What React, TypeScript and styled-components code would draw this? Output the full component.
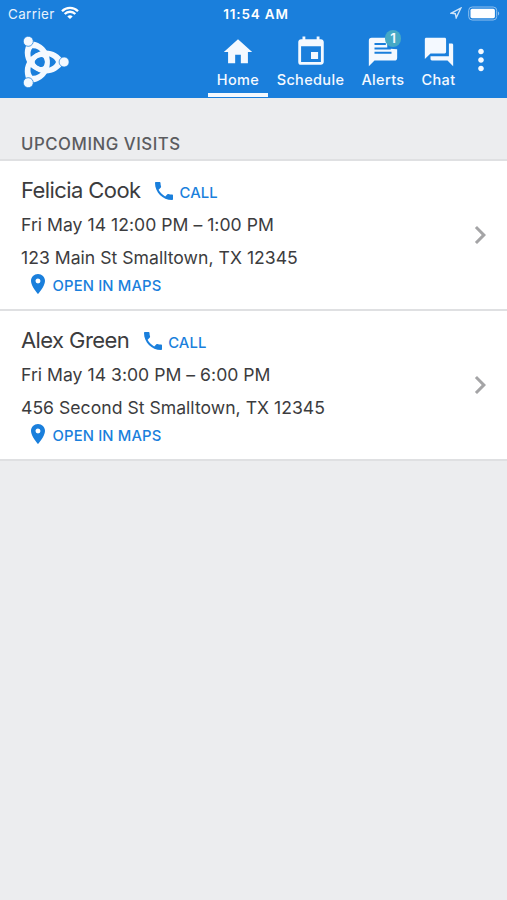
import React from 'react';
import styled, { createGlobalStyle } from 'styled-components';
import { MdHome, MdEvent, MdForum, MdMoreVert, MdPhone, MdPlace, MdChevronRight } from 'react-icons/md';

const BLUE = '#1a7fdc';
const PALE = '#f4f9ff';

const GlobalStyle = createGlobalStyle`
  * { box-sizing: border-box; }
  body { margin: 0; background: #ecedef; font-family: Inter, "Liberation Sans", sans-serif; }
`;

const Screen = styled.div`
  width: 507px;
  height: 900px;
  overflow: hidden;
  background: #ecedef;
  color: #3c3c3e;
`;

const StatusBar = styled.div`
  display: grid;
  grid-template-columns: 1fr auto 1fr;
  align-items: center;
  height: 28px;
  padding: 0 7px 0 8px;
  background: ${BLUE};
  color: #e8f2fc;
  font-size: 13.4px;
  line-height: 27px;
`;

const StatusSide = styled.div<{ $end?: boolean }>`
  display: flex;
  align-items: center;
  justify-content: ${p => (p.$end ? 'flex-end' : 'flex-start')};
  gap: 6px;
  letter-spacing: 0.4px;
  svg { margin-top: -2px; }
`;

const Clock = styled.div`
  padding-left: 4px;
  color: #fff;
  font-size: 13.5px;
  font-weight: 600;
  letter-spacing: 0.85px;
`;

const NavBar = styled.header`
  display: flex;
  height: 70px;
  background: ${BLUE};
  color: ${PALE};
`;

const Brand = styled.div`
  width: 208px;
  padding: 6px 0 0 20px;
`;

const Tab = styled.div<{ $width: number; $active?: boolean }>`
  display: flex;
  flex-direction: column;
  align-items: center;
  width: ${p => p.$width}px;
  height: 69px;
  padding-top: 7px;
  border-bottom: 4px solid ${p => (p.$active ? PALE : 'transparent')};
`;

const TabIcon = styled.div`
  position: relative;
  height: 34px;
  svg { display: block; }
`;

const Badge = styled.span`
  position: absolute;
  top: -5px;
  left: 19px;
  width: 16px;
  height: 17px;
  border-radius: 8px;
  background: #45a9c6;
  color: ${PALE};
  font-size: 13.5px;
  font-weight: 600;
  line-height: 17px;
  text-align: center;
`;

const TabLabel = styled.span`
  font-size: 14.5px;
  font-weight: 500;
  line-height: 22px;
  letter-spacing: 0.35px;
  white-space: nowrap;
`;

const Overflow = styled.div`
  padding-top: 15px;
`;

const SectionTitle = styled.h2`
  height: 63px;
  margin: 0;
  padding: 36px 21px 0;
  border-bottom: 2px solid #dfe0e2;
  color: #5b5c5f;
  font-size: 16.8px;
  font-weight: 500;
  line-height: 20px;
  letter-spacing: 0.54px;
`;

const Visit = styled.article`
  display: flex;
  justify-content: space-between;
  align-items: center;
  height: 150px;
  padding: 0 9px 0 21px;
  border-bottom: 2px solid #dfe0e2;
  background: #fff;
`;

const Details = styled.div`
  height: 148px;
  padding-top: 13px;
`;

const NameRow = styled.div`
  display: flex;
  align-items: center;
  height: 32px;
`;

const Name = styled.span`
  font-size: 22px;
  letter-spacing: -0.59px;
`;

const Action = styled.a<{ $map?: boolean }>`
  display: flex;
  align-items: center;
  gap: ${p => (p.$map ? 3 : 3.5)}px;
  margin-left: ${p => (p.$map ? 4.5 : 11.5)}px;
  margin-top: ${p => (p.$map ? -2 : 1)}px;
  color: ${BLUE};
  font-size: 14.8px;
  font-weight: 500;
  line-height: 24px;
  letter-spacing: 0.15px;
`;

const ActionText = styled.span`
  padding-top: 4px;
`;

const Line = styled.div`
  height: 33px;
  font-size: 17.6px;
  line-height: 37px;
  letter-spacing: 0.02px;
  white-space: nowrap;
`;

const Logo = () => (
  <svg width="52" height="56" viewBox="20 34 52 56">
    {[0, 120, 240].map(angle => (
      <g key={angle} transform={`rotate(${angle} 40.2 62)`}>
        <path
          d="M64 62C57 76 40 76 33 68C29 64 29 60 33 56C40 48 57 48 64 62Z M56 62C53 54.8 42 54.5 37 58.5C34 61 34 63 37 65.5C42 69.5 53 69.2 56 62Z"
          fill={PALE}
          fillRule="evenodd"
        />
        <circle cx="64.1" cy="62" r="5" fill={PALE} stroke={BLUE} strokeWidth="0.7" />
      </g>
    ))}
  </svg>
);

const Wifi = () => (
  <svg width="18" height="14" viewBox="0 0 18 14" fill="none" stroke="#fff" strokeWidth="2.3">
    <path d="M1 5.2a11.3 11.3 0 0 1 16 0M3.7 8a7.4 7.4 0 0 1 10.6 0" />
    <path d="M9 13L6.3 10.4a4 4 0 0 1 5.4 0z" fill="#fff" stroke="none" />
  </svg>
);

const LocationArrow = () => (
  <svg width="12" height="12" viewBox="0 0 12 12" fill="none" stroke="#cfe4f8" strokeWidth="1.4">
    <path d="M10.8 1.2L1.3 6.2L5.3 6.7L6.2 10.8Z" />
  </svg>
);

const Battery = () => (
  <svg width="32" height="15" viewBox="0 0 32 15">
    <rect x="0.7" y="1" width="28" height="13" rx="3.5" fill="none" stroke="#8fc0ee" />
    <rect x="2.5" y="2.8" width="24.4" height="9.4" rx="1.6" fill="#fff" />
    <path d="M30 5.5c1.6.5 1.6 3.5 0 4z" fill="#8fc0ee" />
  </svg>
);

const AlertsIcon = () => (
  <svg width="34" height="34" viewBox="0 0 24 24" fill="currentColor">
    <path d="M22 10V16a2 2 0 0 1-2 2H6l-4 4V4a2 2 0 0 1 2-2H15V9.5Z" />
    <path d="M6 6.4H14M6 9.5H17.5M6 12.6H18" stroke={BLUE} strokeWidth="1.4" />
  </svg>
);

const visits = [
  { name: 'Felicia Cook', time: 'Fri May 14 12:00 PM – 1:00 PM', address: '123 Main St Smalltown, TX 12345' },
  { name: 'Alex Green', time: 'Fri May 14 3:00 PM – 6:00 PM', address: '456 Second St Smalltown, TX 12345' },
];

export default function App() {
  return (
    <Screen>
      <GlobalStyle />
      <StatusBar>
        <StatusSide>Carrier <Wifi /></StatusSide>
        <Clock>11:54 AM</Clock>
        <StatusSide $end><LocationArrow /><Battery /></StatusSide>
      </StatusBar>
      <NavBar>
        <Brand><Logo /></Brand>
        <Tab $width={60} $active><TabIcon><MdHome size={34} /></TabIcon><TabLabel>Home</TabLabel></Tab>
        <Tab $width={85}><TabIcon><MdEvent size={34} /></TabIcon><TabLabel>Schedule</TabLabel></Tab>
        <Tab $width={60}><TabIcon><AlertsIcon /><Badge>1</Badge></TabIcon><TabLabel>Alerts</TabLabel></Tab>
        <Tab $width={51}><TabIcon><MdForum size={34} /></TabIcon><TabLabel>Chat</TabLabel></Tab>
        <Overflow><MdMoreVert size={34} /></Overflow>
      </NavBar>
      <SectionTitle>UPCOMING VISITS</SectionTitle>
      {visits.map(v => (
        <Visit key={v.name}>
          <Details>
            <NameRow>
              <Name>{v.name}</Name>
              <Action><MdPhone size={24} /><ActionText>CALL</ActionText></Action>
            </NameRow>
            <Line>{v.time}</Line>
            <Line>{v.address}</Line>
            <Action $map><MdPlace size={24} /><ActionText>OPEN IN MAPS</ActionText></Action>
          </Details>
          <MdChevronRight size={36} color="#a4a4a6" />
        </Visit>
      ))}
    </Screen>
  );
}
